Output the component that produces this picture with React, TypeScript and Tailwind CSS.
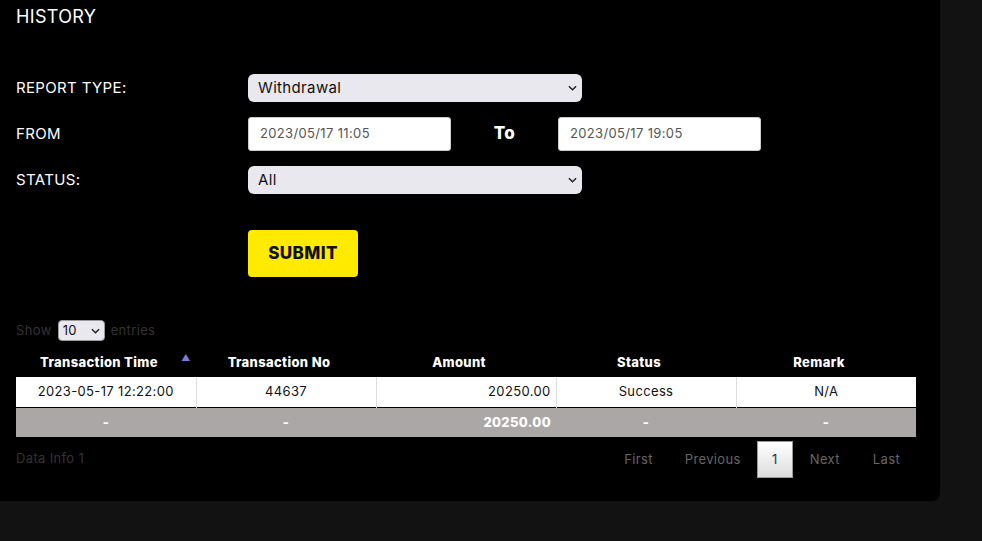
import React from "react";

const cols = ["Transaction Time", "Transaction No", "Amount", "Status", "Remark"];

function Chevron() {
  return (
    <svg viewBox="0 0 10 6" className="w-[9px] h-[6px]" fill="none" stroke="#222" strokeWidth="1.6">
      <path d="M1 1l4 4 4-4" />
    </svg>
  );
}

function SelectBox({ value }: { value: string }) {
  return (
    <div className="w-[334px] h-[28px] rounded-[6px] bg-[#e9e8ee] flex items-center justify-between pl-[10px] pr-[5px] text-[15px] text-[#111]">
      <span>{value}</span>
      <Chevron />
    </div>
  );
}

function DateBox({ value }: { value: string }) {
  return (
    <div className="w-[203px] h-[34px] rounded-[3px] bg-white border border-[#ccc] flex items-center pl-[11px] text-[13px] text-[#555]">
      {value}
    </div>
  );
}

export default function App() {
  return (
    <div className="w-[982px] h-[541px] bg-[#121212] font-['Inter',sans-serif] tracking-[0.35px] overflow-hidden">
      <div className="w-[940px] h-[501px] bg-black rounded-br-[8px] px-[16px] pt-[7px]">
        <h1 className="text-[18px] text-white leading-[20px]">HISTORY</h1>

        {/* Form */}
        <div className="mt-[47px] flex flex-col">
          <div className="flex items-center h-[28px]">
            <div className="w-[232px] text-[15px] text-white">REPORT TYPE:</div>
            <SelectBox value="Withdrawal" />
          </div>
          <div className="flex items-center h-[34px] mt-[15px]">
            <div className="w-[232px] text-[15px] text-white">FROM</div>
            <DateBox value="2023/05/17 11:05" />
            <div className="w-[107px] text-center text-[17px] font-extrabold text-white">To</div>
            <DateBox value="2023/05/17 19:05" />
          </div>
          <div className="flex items-center h-[28px] mt-[15px]">
            <div className="w-[232px] text-[15px] text-white">STATUS:</div>
            <SelectBox value="All" />
          </div>
          <div className="pl-[232px] mt-[36px]">
            <button className="w-[110px] h-[47px] rounded-[4px] bg-[#ffea00] text-[17px] font-extrabold text-[#111] tracking-[0.4px]">
              SUBMIT
            </button>
          </div>
        </div>

        {/* Table controls */}
        <div className="mt-[43px] flex items-center gap-[6px] text-[13px] text-[#333] h-[21px]">
          <span>Show</span>
          <div className="w-[47px] h-[21px] rounded-[4px] bg-[#e9e8ee] border border-[#999] flex items-center justify-between px-[4px] text-[#111] text-[13px]">
            <span>10</span>
            <Chevron />
          </div>
          <span>entries</span>
        </div>

        <table className="mt-[8px] w-[900px] border-collapse table-fixed text-[13px]">
          <thead>
            <tr className="h-[28px]">
              {cols.map((c, i) => (
                <th key={c} className="relative pr-[14px] text-white font-extrabold text-center align-middle">
                  {c}
                  {i === 0 && (
                    <span className="absolute right-[5px] top-[2px] text-[9px] text-[#7b7bd6]">▲</span>
                  )}
                </th>
              ))}
            </tr>
          </thead>
          <tbody>
            <tr className="h-[30px] bg-white text-[#111]">
              <td className="text-center border-r border-[#ddd]">2023-05-17 12:22:00</td>
              <td className="text-center border-r border-[#ddd]">44637</td>
              <td className="text-right pr-[5px] border-r border-[#ddd]">20250.00</td>
              <td className="text-center border-r border-[#ddd]">Success</td>
              <td className="text-center">N/A</td>
            </tr>
            <tr className="h-[30px] bg-[#aba7a6] text-white font-extrabold border-t border-black">
              <td className="text-center">-</td>
              <td className="text-center">-</td>
              <td className="text-right pr-[5px]">20250.00</td>
              <td className="text-center">-</td>
              <td className="text-center">-</td>
            </tr>
          </tbody>
        </table>

        <div className="flex items-start justify-between w-[900px] mt-[4px] text-[13px]">
          <div className="pt-[8px] text-[#333]">Data Info 1</div>
          <div className="flex items-center text-[#666]">
            <span className="px-[16px]">First</span>
            <span className="px-[16px]">Previous</span>
            <span className="w-[36px] h-[37px] flex items-center justify-center border border-[#999] bg-gradient-to-b from-white to-[#dcdcdc] text-[#333]">
              1
            </span>
            <span className="px-[17px]">Next</span>
            <span className="px-[16px]">Last</span>
          </div>
        </div>
      </div>
    </div>
  );
}
